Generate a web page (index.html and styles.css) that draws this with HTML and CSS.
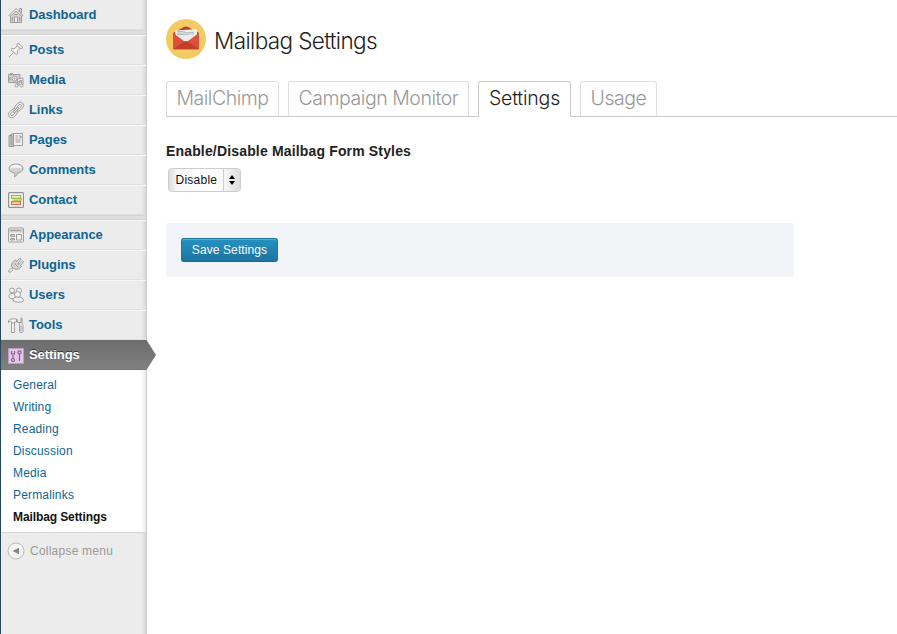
FILE: index.html
```html
<!DOCTYPE html>
<html lang="en">
<head>
<meta charset="utf-8">
<title>Mailbag Settings</title>
<link rel="stylesheet" href="styles.css">
</head>
<body>
<div class="app">
<nav class="sidebar">
  <a class="item first"><svg class="icon" viewBox="0 0 16 16"><path class="shade" d="M2.500 8v7.500h11V8L8 3zM11.500 4.500v-3h2v5"/><path class="fill" d="M1 8.500 8 1.500l7 7-1.500.5L8 4 2.500 9z"/><path class="fill" d="M6.500 15.500V10h3v5.500z"/><path d="M4.500 10v4M11.700 10v4M6.500 7.500h3"/></svg>Dashboard</a>
  <div class="separator"></div>
  <a class="item"><svg class="icon" viewBox="0 0 16 16"><path class="fill" d="M10 1l5 4.500-1.500 1-1.500-.3L9.500 9l.2 2.500-1.500 1L3 8l1-1.500 2.500.2L9.200 4 9 2.500z"/><path d="M5.500 10.500 .8 15.200M9.500 4l2.700 2.300"/></svg>Posts</a>
  <a class="item"><svg class="icon" viewBox="0 0 16 16"><path class="shade" d="M.5 2.500h11.500v8H.5z"/><path d="M2 1.500h3M2 8.500V5"/><circle class="fill" cx="6.500" cy="6.500" r="2.500"/><circle cx="6.500" cy="6.500" r=".7"/><path class="fill" d="M9.500 13V7l5.500-1v6.500h-1.500v-4l-2.500.5v4z"/><circle class="fill" cx="8.500" cy="13.500" r="1.500"/><circle class="fill" cx="13.500" cy="13.500" r="1.500"/></svg>Media</a>
  <a class="item"><svg class="icon" viewBox="0 0 16 16"><g class="fill" transform="rotate(-47 8 8)"><rect x="-1.500" y="4.700" width="10" height="6.600" rx="3.300"/><rect x=".8" y="6.700" width="5.500" height="2.600" rx="1.300"/><rect x="7.500" y="4.700" width="10" height="6.600" rx="3.300"/><rect x="9.700" y="6.700" width="5.500" height="2.600" rx="1.300"/><rect x="4.500" y="7.200" width="7" height="1.600" rx=".8"/></g></svg>Links</a>
  <a class="item"><svg class="icon" viewBox="0 0 16 16"><path class="shade" d="M1 3.500h3v11H1zM3 2h3v12.500H3z"/><path class="fill" d="M5.500 1.500h9v12h-9z"/><path d="M7.500 4h2.500M7.500 6h2M11 4h2v2h-2M7.500 8h5M7.500 10h5"/></svg>Pages</a>
  <a class="item"><svg class="icon" viewBox="0 0 16 16"><path class="shade" d="M8 2c4 0 7 2 7 4.500S12 11 9.500 11c-.5 2-1.500 3-3 4 .5-1.500.5-3 0-4C3 10.500 1 8.800 1 6.500 1 4 4 2 8 2z"/><path class="shine" d="M2 6.500C2.500 1.500 13.500 1.500 14 6.500c-2-1-9-1-12 0z"/></svg>Comments</a>
  <a class="item"><svg class="icon" viewBox="0 0 16 16"><rect class="contact" x=".6" y=".6" width="14.800" height="14.800" rx="1"/><rect class="green" x="3.500" y="3.500" width="9" height="2.800"/><path class="green-line" d="M4.500 8.200h8.500V6"/><rect class="orange" x="3.500" y="9.700" width="9" height="2.800"/></svg>Contact</a>
  <div class="separator"></div>
  <a class="item"><svg class="icon" viewBox="0 0 16 16"><rect class="fill" x=".5" y="1" width="15" height="14" rx="1"/><path class="solid" d="M1 1.500h14v4H1z"/><path d="M2.500 3.500h10"/><path class="shade" d="M2.500 7.500h4v2h-4zM2.500 11.500h4v1.500h-4z"/><path d="M8.500 7.500h5V13h-5z"/></svg>Appearance</a>
  <a class="item"><svg class="icon" viewBox="0 0 16 16"><path class="shade" d="M7.500 3l6 6.500c-2 3-5.500 3.500-8 2L4 10C2.500 7.500 4.500 4.500 7.500 3z"/><path class="fill" d="M8 5.500 12 1l1.200 1L9.500 6.500M10.500 8 14.500 3.700l1 1.200L12 9"/><path d="M6.500 6.500l3.500 3.500M5 11.500C3 10.500 .5 13 .7 15c2 .5 4.300-1 3.800-2.500"/></svg>Plugins</a>
  <a class="item"><svg class="icon" viewBox="0 0 16 16"><g class="fill"><circle cx="4" cy="3.500" r="2.500"/><circle cx="11" cy="3.500" r="2.500"/><path d="M1 9.500c0-4 6-4 7-1l-2 3c-3 .5-5 0-5-2z"/><circle cx="9.500" cy="7.500" r="3"/><path d="M5 13.700c0-4 4-4 5-3.500 3-.5 5.500 1 5.500 3.500-2 2-8 2-10.500 0z"/></g></svg>Users</a>
  <a class="item"><svg class="icon" viewBox="0 0 16 16"><path class="fill" d="M.5 4c1-2 3-2.500 8-2v3H6.500v10.500h-3V5c-1-1-2-1-3 .5zM13 1v4.500h-1.500v9c0 1.500 3.500 1.500 3.500 0v-6l-1-1.500V1zM9.500 2.500v3h2"/><path d="M4 6h2M13 8.500v6"/></svg>Tools</a>
  <a class="item current"><svg class="icon" viewBox="0 0 16 16"><rect class="purple" x=".5" y=".5" width="15" height="15"/><path class="knobs" d="M5 7v3M5 10v1M3.500 3v3h3V3M11.500 6v7"/><circle class="knobs" cx="5" cy="12" r="1.500"/><circle class="knobs" cx="11.500" cy="4.500" r="1.600"/></svg>Settings<svg class="arrow" viewBox="0 0 10 30"><defs><linearGradient id="ag" x2="0" y2="1"><stop stop-color="#6d6d6d"/><stop offset="1" stop-color="#808080"/></linearGradient></defs><path d="M0 0H.5L10 15 .5 30H0z" fill="url(#ag)"/></svg></a>
  <div class="submenu">
    <a>General</a><a>Writing</a><a>Reading</a><a>Discussion</a><a>Media</a><a>Permalinks</a><a class="active">Mailbag Settings</a>
  </div>
  <a class="collapse"><svg viewBox="0 0 18 18"><circle cx="9" cy="9" r="8" fill="#f4f4f4" stroke="#bbb"/><path d="M5.500 9 12 5.800v6.400z" fill="#858585"/></svg>Collapse menu</a>
</nav>
<main class="content">
  <header class="title">
    <svg class="logo" viewBox="0 0 40 40"><circle cx="20" cy="20" r="20" fill="#f2cc62"/><path d="M7 14 18 8q2-1 4 0L33 14v4H7z" fill="#b83c22"/><path d="M7 14h26v16H7z" fill="#c9432f"/><path d="M9 11.500 31 10v12l-11 5-10-5z" fill="#e9edee"/><path d="M11 12.700 19 12.200M11 14.300 28 13.300M11 15.800l17-1" stroke="#a9b0b2" stroke-width=".8"/><path d="M7 14l13 9.500L33 14v15.500q0 .8-.8.800H7.800q-.8 0-.8-.8z" fill="#e04f3c"/><path d="M7.500 30.300 18 22.500q2-1 4 0l10.500 7.800z" fill="#c23e28"/></svg>
    <h1>Mailbag Settings</h1>
  </header>
  <div class="tabs"><a class="tab mc">MailChimp</a><a class="tab cm">Campaign Monitor</a><a class="tab st selected">Settings</a><a class="tab us">Usage</a></div>
  <section class="form">
    <h2>Enable/Disable Mailbag Form Styles</h2>
    <div class="select"><span>Disable</span><i><svg viewBox="0 0 6 10"><path d="M0 4 3 0l3 4zM0 6h6l-3 4z"/></svg></i></div>
    <div class="submit"><button>Save Settings</button></div>
  </section>
</main>
</div>
</body>
</html>
```
FILE: styles.css
```css
* { box-sizing: border-box; }
body { margin: 0; background: #fff; font-family: "Liberation Sans", Arial, sans-serif; }
.app { display: flex; height: 634px; overflow: hidden; }
.sidebar {
  width: 147px; flex: none; border-left: 1px solid #24485f; border-right: 1px solid #ccc;
  background: #ececec; box-shadow: inset -6px 0 5px -5px rgba(0,0,0,.15);
}
.item {
  position: relative; display: flex; align-items: center; height: 30px; padding: 0 0 1px 7px;
  gap: 5px; border-top: 1px solid #f7f7f7; border-bottom: 1px solid #dfdfdf;
  color: #0c6591; font-size: 13px; font-weight: bold; letter-spacing: -.07px;
}
.first { border-top: 0; }
.icon { width: 16px; height: 16px; flex: none; fill: none; stroke: #959595; stroke-width: .9; position: relative; top: 1px; overflow: visible; }
.item:not(.current) .icon { left: -.5px; top: .5px; }
.fill { fill: #f1f1f1; }
.shade { fill: #d2d2d2; }
.shine { fill: #f8f8f8; stroke: none; }
.solid { fill: #cfcfcf; stroke: none; }
.contact { fill: #f8f8f4; stroke: #90909a; stroke-width: 1.2; }
.green { fill: #f3f6df; stroke: #a5b938; stroke-width: 1.3; }
.green-line { fill: none; stroke: #a5b938; stroke-width: 1.3; }
.orange { fill: #faeade; stroke: #d47655; stroke-width: 1.3; }
.separator { height: 5px; background: #dedede; border-top: 1px solid #d3d3d3; border-bottom: 1px solid #d3d3d3; }
.current { background: linear-gradient(#6d6d6d, #808080); border-color: #6d6d6d; border-bottom-color: #777; color: #fff; text-shadow: 0 -1px 0 #333; }
.arrow { position: absolute; left: 145px; top: -1px; width: 10px; height: 30px; }
.purple { fill: #e3c6e7; stroke: #c09bc5; }
.knobs { fill: none; stroke: #805a88; stroke-width: 1.1; }
.submenu { height: 163px; padding-top: 4px; background: #fff; border-bottom: 1px solid #d5d5d5; box-shadow: inset -6px 0 5px -5px rgba(0,0,0,.15); }
.submenu a { display: block; height: 22px; padding-left: 12px; line-height: 22px; font-size: 12px; letter-spacing: .17px; color: #0c6591; }
.submenu .active { color: #111; font-weight: bold; letter-spacing: -.1px; }
.collapse { display: flex; align-items: center; gap: 5px; height: 36px; padding-left: 6px; font-size: 12px; letter-spacing: .23px; color: #999; }
.collapse svg { width: 18px; height: 18px; margin-left: -.5px; margin-right: .5px; }
.content { flex: 1; padding: 19px 0 0 19px; }
.title { display: flex; align-items: center; gap: 8px; height: 40px; }
.logo { width: 40px; height: 40px; }
h1 { margin: 4px 0 0; font: 300 22.5px/30px Inter, "Liberation Sans", sans-serif; letter-spacing: -.62px; color: #222; }
.tabs { display: flex; gap: 9px; height: 36px; margin-top: 22px; border-bottom: 1px solid #ccc; }
.tab { height: 35px; border: 1px solid #dfdfdf; border-bottom: 0; border-radius: 3px 3px 0 0; text-align: center; white-space: nowrap; font: 300 19.5px/33px Inter, "Liberation Sans", sans-serif; letter-spacing: -.46px; color: #999; }
.mc { width: 113px; }
.cm { width: 181px; }
.st { width: 93px; }
.us { width: 77px; }
.tab.selected { height: 36px; background: #fff; border-color: #ccc; color: #222; letter-spacing: -.2px; }
h2 { margin: 26px 0 0; font-size: 14px; line-height: 17px; letter-spacing: .16px; color: #222; }
.select { display: flex; width: 73px; height: 24px; margin: 8px 0 0 1.5px; border: 1px solid #ccc; border-radius: 4px; background: linear-gradient(90deg, #ddd, #f8f8f8 8px, #fff 40px, #eee); font-size: 12px; line-height: 22px; color: #111; overflow: hidden; }
.select span { width: 54px; padding-left: 7px; letter-spacing: .25px; }
.select i { display: flex; flex: 1; align-items: center; justify-content: center; border-left: 1px solid #ccc; background: linear-gradient(90deg, #f6f6f6, #ddd); }
.select svg { width: 6px; height: 10px; }
.submit { width: 628px; height: 54px; margin-top: 31px; padding: 15px; background: #f2f4f8; border-radius: 2px; }
button { display: block; width: 97px; height: 24px; padding: 0; border: 1px solid #21759b; border-bottom-color: #1e6a8d; border-radius: 3px; background: linear-gradient(#2591c2, #1c75a0); box-shadow: inset 0 1px 0 rgba(120,200,230,.5); color: #fff; font: 12px/20px "Liberation Sans", Arial, sans-serif; letter-spacing: .1px; text-shadow: 0 1px 0 rgba(0,0,0,.1); }
```
